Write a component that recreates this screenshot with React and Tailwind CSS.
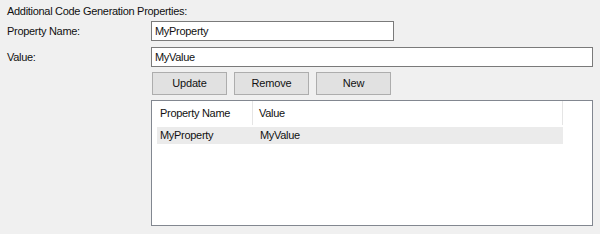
import React from 'react';

const font = { fontFamily: '"Liberation Sans", Arial, sans-serif' };

const Button = ({ children }) => (
  <button className="w-[75px] h-[23px] bg-[#e1e1e1] border border-[#adadad] text-[11px] text-[#111] leading-none tracking-[-0.2px]">
    {children}
  </button>
);

const App = () => (
  <div className="w-[600px] h-[234px] bg-[#f0f0f0] text-[11px] text-[#111] tracking-[-0.3px] overflow-hidden" style={font}>
    <div className="pt-[4px] pl-[7px] h-[18px] leading-[14px]">Additional Code Generation Properties:</div>

    <div className="mt-[3px] flex items-center">
      <span className="w-[151px] pl-[7px]">Property Name:</span>
      <div className="w-[243px] h-[20px] bg-white border border-[#7a7a7a] flex items-center px-[3px]">MyProperty</div>
    </div>

    <div className="mt-[6px] flex items-center">
      <span className="w-[151px] pl-[7px]">Value:</span>
      <div className="w-[442px] h-[20px] bg-white border border-[#7a7a7a] flex items-center px-[3px]">MyValue</div>
    </div>

    <div className="mt-[5px] pl-[152px] flex gap-[7px]">
      <Button>Update</Button>
      <Button>Remove</Button>
      <Button>New</Button>
    </div>

    <div className="mt-[5px] ml-[151px] w-[442px] h-[126px] bg-white border border-[#828790]">
      <div className="flex h-[24px]">
        <div className="w-[101px] pl-[8px] flex items-center border-r border-[#e5e5e5]">Property Name</div>
        <div className="w-[310px] pl-[6px] flex items-center border-r border-[#e5e5e5]">Value</div>
      </div>
      <div className="mt-[2px] ml-[5px] w-[406px] h-[17px] bg-[#ebebeb] flex items-center">
        <span className="w-[98px] pl-[3px]">MyProperty</span>
        <span className="pl-[5px]">MyValue</span>
      </div>
    </div>
  </div>
);

export default App;
